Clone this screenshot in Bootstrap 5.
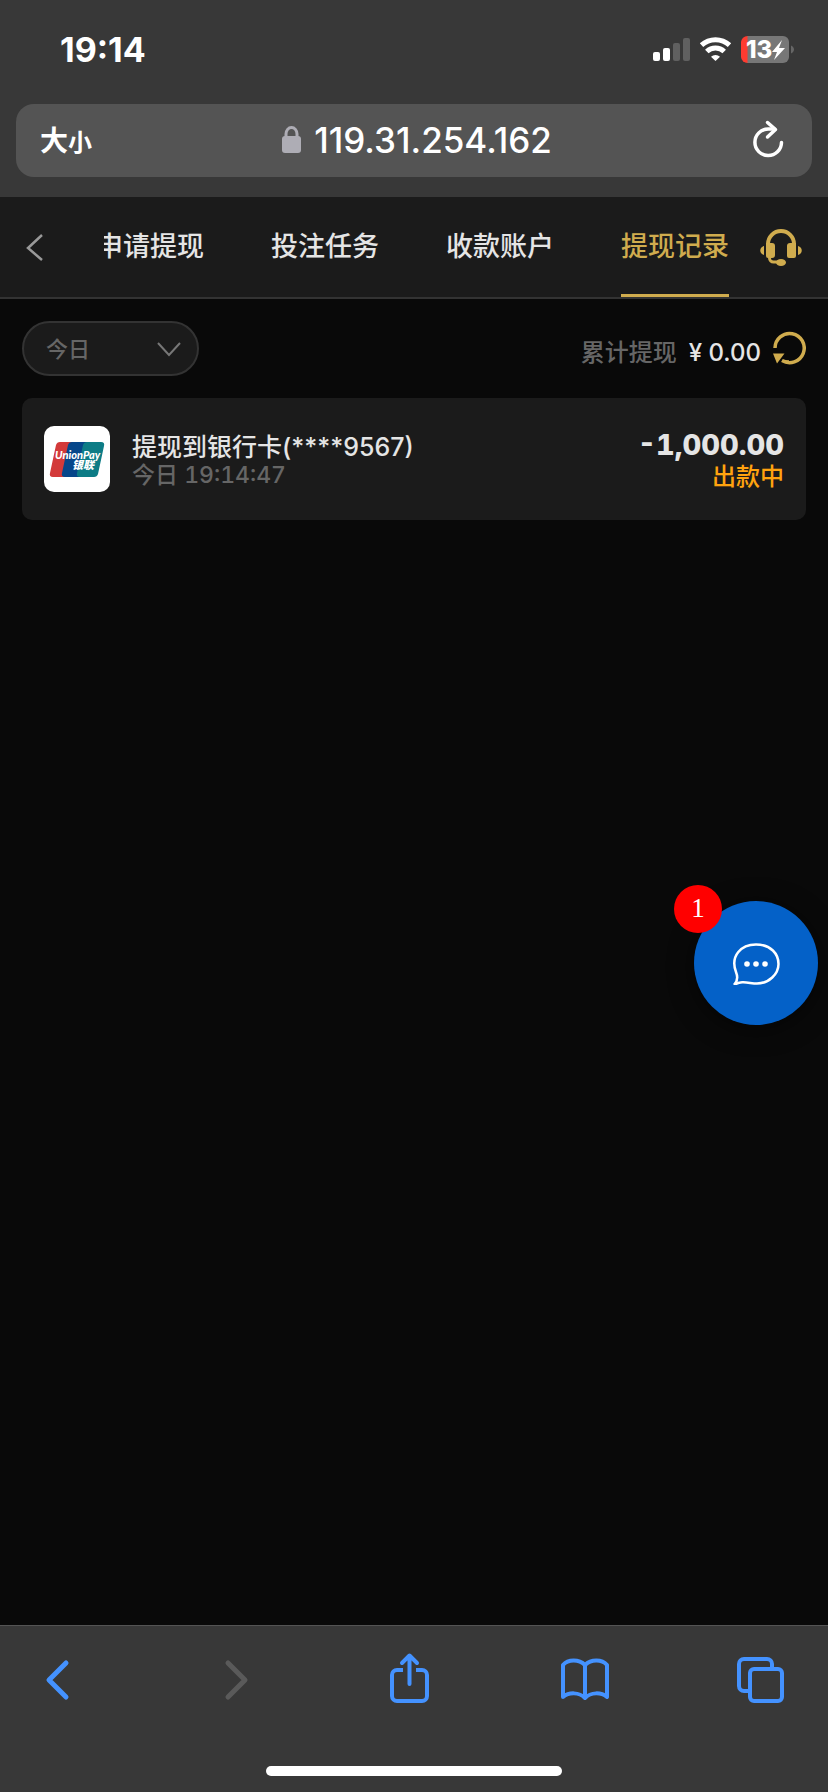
<!DOCTYPE html>
<html lang="zh-CN">
<head>
<meta charset="utf-8">
<meta name="viewport" content="width=device-width, initial-scale=1">
<title>提现记录</title>
<link href="https://cdn.jsdelivr.net/npm/bootstrap@5.3.0/dist/css/bootstrap.min.css" rel="stylesheet">
<style>
  body { background: #090909; color: #e5e5e5; font-family: Inter, "Noto Sans CJK SC", sans-serif; font-size: 24px; font-weight: 500; line-height: 28px; }
  svg { display: block; flex: none; }
  .chrome { background: #383838; color: #fff; }
  .status-bar { height: 104px; padding: 0 34px 4px 60px; }
  .clock { font-size: 34px; font-weight: 700; }
  .time, .amount { font-variant-numeric: tabular-nums; }
  .plain { background: none; border: 0; padding: 0; color: inherit; font: inherit; }
  .address { background: #545454; border-radius: 18px; height: 73px; padding: 0 28px 2px 24px; margin: 0 16px 20px; }
  .address .side { flex: 1 1 0; }
  .big { font-size: 28px; font-weight: 700; }
  .little { font-size: 24px; font-weight: 700; }
  .site { padding-left: 10px; }
  .host { font-size: 35px; line-height: 40px; }
  .tabs-bar { background: #1b1b1b; border-bottom: 2px solid #333; height: 102px; padding: 0 26px; }
  .tab-strip { margin: 0 31px 0 61px; gap: 67px; min-width: 0; }
  .tab-strip a { color: #e5e5e5; text-decoration: none; font-size: 27px; line-height: 95px; padding-top: 2px; border-bottom: 3px solid transparent; white-space: nowrap; }
  .tab-strip a.active { color: #d0ac4e; border-color: #d0ac4e; }
  .gold { color: #d0ac4e; }
  .dim { color: #666; }
  .gutter { padding: 22px; }
  .filters { margin-bottom: 22px; }
  .filter select { appearance: none; width: 177px; height: 55px; border: 2px solid #333; border-radius: 28px; background: #1b1b1b; color: #666; padding: 0 22px; font-size: 22px; font-weight: 500; }
  .filter svg { right: 18px; top: 20px; pointer-events: none; }
  .total { padding-top: 8px; margin-right: 12px; }
  .record { background: #1b1b1b; border-radius: 10px; padding: 28px 22px; gap: 22px; }
  .record-text { padding-top: 3px; }
  .logo { background: #fff; border-radius: 10px; }
  .title { font-size: 25px; }
  .time { font-size: 23px; }
  .amount { font-size: 29px; font-weight: 800; line-height: 32px; }
  .state { line-height: 31px; color: #ffa30f; }
  .chat { right: 10px; bottom: 600px; width: 124px; height: 124px; background: #0461c8; box-shadow: 0 4px 24px #0008; }
  .unread { left: -20px; top: -16px; width: 48px; height: 48px; background: #f00; font: 27px/46px "Liberation Serif", serif; }
  .toolbar { border-top: 1px solid #545454; height: 167px; }
  .tools { padding: 26px 43px 0 34px; color: #4492ff; }
  .home { width: 296px; height: 10px; background: #fff; border-radius: 5px; margin-bottom: 16px; }
</style>
</head>
<body>
<div class="d-flex flex-column min-vh-100">
  <header class="chrome">
    <div class="status-bar d-flex justify-content-between align-items-center">
      <span class="clock">19:14</span>
      <div class="d-flex align-items-center">
        <svg width="142" height="28" viewBox="0 0 142 28" role="img" aria-label="信号、无线网络、电量 13%">
          <g fill="#fff"><rect x="1" y="16" width="7" height="9" rx="2"/><rect x="11" y="12" width="7" height="13" rx="2"/></g>
          <g fill="#606060"><rect x="21" y="7" width="7" height="18" rx="2"/><rect x="31" y="2" width="7" height="23" rx="2"/></g>
          <g fill="none" stroke="#fff" stroke-width="5"><path d="M49.500 9.200a20.500 20.500 0 0 1 28 0"/><path d="M54.800 15.500a12.600 12.600 0 0 1 17.400 0"/></g>
          <path d="M63.500 25l-4.500-4.300a6.500 6.500 0 0 1 9 0z" fill="#fff"/>
          <path d="M95 0h36a6 6 0 0 1 6 6v15a6 6 0 0 1-6 6H95z" fill="#777"/>
          <path d="M95.500 0v27a6.500 6.500 0 0 1-6.500-6V6a6.500 6.500 0 0 1 6.500-6z" fill="#ff3b30"/>
          <path d="M139 9.500c4 2 4 6 0 8z" fill="#666"/>
          <text x="94" y="22" fill="#fff" font-size="24" font-weight="800">13</text>
          <path d="M130 4l-10 12h5l-3 8 11-12h-6l3-8z" fill="#fff"/>
        </svg>
      </div>
    </div>
    <div class="address d-flex align-items-center">
      <div class="side pt-1"><button class="plain" type="button" aria-label="大小"><span class="big">大</span><span class="little">小</span></button></div>
      <button class="plain site d-flex align-items-center" type="button">
        <svg class="me-2" width="24" height="28" viewBox="0 0 24 28"><rect x="0" y="10" width="19" height="17" rx="3" fill="#aeadb5"/><path d="M4 12V8a5.500 6.500 0 0 1 11 0v4" fill="none" stroke="#aeadb5" stroke-width="3"/></svg>
        <span class="host">119.31.254.162</span>
      </button>
      <div class="side d-flex justify-content-end">
        <button class="plain" type="button" aria-label="重新载入"><svg width="32" height="40" viewBox="0 0 32 40" fill="none" stroke="#fff" stroke-width="3.500" stroke-linecap="round" stroke-linejoin="round"><path d="M29.500 22.500a13.300 13.300 0 1 1-13.300-13.500h6"/><path d="M15.500 2.500l8 7-8 7.500"/></svg></button>
      </div>
    </div>
  </header>

  <nav class="tabs-bar d-flex align-items-center">
    <button class="plain" type="button" aria-label="返回"><svg width="17" height="28" viewBox="0 0 17 28" fill="none" stroke="#999" stroke-width="2.500"><path d="M16 2L2 15l14 12"/></svg></button>
    <div class="tab-strip d-flex flex-grow-1 justify-content-end overflow-hidden">
      <a href="#apply">申请提现</a>
      <a href="#tasks">投注任务</a>
      <a href="#accounts">收款账户</a>
      <a href="#records" class="active" aria-current="page">提现记录</a>
    </div>
    <button class="plain gold" type="button" aria-label="客服">
      <svg width="42" height="40" viewBox="0 -2 42 40" fill="currentColor">
        <path d="M8 16v-1a13 13 0 0 1 26 0v1" fill="none" stroke="currentColor" stroke-width="4"/>
        <path d="M6 14h6a3 3 0 0 1 3 3v9a3 3 0 0 1-3 3H8a2 2 0 0 1-2-2zM36 14h-6a3 3 0 0 0-3 3v10a2 2 0 0 0 2 2h5a2 2 0 0 0 2-2zM4 17v9c-5-1-5-8 0-9zM38 17v9c5-1 5-8 0-9z"/>
        <path d="M9.500 27v2a4 4 0 0 0 4 4H19" fill="none" stroke="currentColor" stroke-width="3"/><ellipse cx="21" cy="33.500" rx="5" ry="3.500"/>
      </svg>
    </button>
  </nav>

  <main class="flex-grow-1 position-relative gutter">
    <div class="filters d-flex justify-content-between align-items-center">
      <div class="filter position-relative">
        <select aria-label="日期"><option>今日</option><option>昨日</option></select>
        <svg class="position-absolute" width="24" height="16" viewBox="0 0 24 16" fill="none" stroke="#777" stroke-width="2"><path d="M1 2l11 12L23 2"/></svg>
      </div>
      <div class="d-flex align-items-center">
        <span class="dim total">累计提现</span>
        <span class="total">¥ 0.00</span>
        <button class="plain gold" type="button" aria-label="刷新"><svg width="33" height="36" viewBox="0 0 33 36"><path d="M2 17A14.600 14.600 0 1 1 9 29.500Q12 31 16 31" fill="none" stroke="currentColor" stroke-width="3.500"/><path d="M0 22.500h11.500L4 32.500z" fill="currentColor"/></svg></button>
      </div>
    </div>

    <div class="record d-flex align-items-center">
      <svg class="logo" width="66" height="66" viewBox="0 0 66 66" role="img" aria-label="银联">
        <path d="M16 16h18l-8 35H9q-4 0-3-4l6-28q1-3 4-3z" fill="#d33a3a"/>
        <path d="M28 16h18l-8 35H21q-4 0-3-4l6-28q1-3 4-3z" fill="#06468a"/>
        <path d="M43 16h14q4 0 3 4l-6 28q-1 3-4 3H36q-4 0-3-4l6-28q1-3 4-3z" fill="#0d7c86"/>
        <text x="11" y="33" fill="#fff" font-family="Lato" font-size="11" font-weight="900" font-style="italic">UnionPay</text>
        <text x="28" y="43" fill="#fff" font-size="11" font-weight="900" font-style="italic">银联</text>
      </svg>
      <div class="record-text flex-grow-1">
        <div class="title">提现到银行卡(****9567)</div>
        <div class="time dim">今日 19:14:47</div>
      </div>
      <div class="record-text text-end">
        <div class="amount">-1,000.00</div>
        <div class="state">出款中</div>
      </div>
    </div>

    <button class="plain chat position-absolute rounded-circle d-flex align-items-center justify-content-center text-white" type="button" aria-label="在线客服，1 条未读">
      <svg width="48" height="44" viewBox="0 -2 48 44"><path d="M2 42c4-4 4-8 2-13C-2 13 9 1.500 24 1.500S46.500 11 46.500 21 37 40.500 25 40.500C17 40.500 10 37 2 42z" fill="none" stroke="#fff" stroke-width="2.500"/><g fill="#fff"><circle cx="15" cy="21" r="2.800"/><circle cx="24" cy="21" r="2.800"/><circle cx="33" cy="21" r="2.800"/></g></svg>
      <span class="unread position-absolute rounded-circle text-center">1</span>
    </button>
  </main>

  <footer class="chrome toolbar d-flex flex-column justify-content-between align-items-center">
    <div class="tools w-100 d-flex justify-content-between">
      <button class="plain" type="button" aria-label="后退"><svg width="48" height="56" viewBox="0 0 48 56" fill="none" stroke="currentColor" stroke-width="5" stroke-linecap="round" stroke-linejoin="round"><path d="M32 11L15 28l17 17"/></svg></button>
      <button class="plain" type="button" aria-label="前进" disabled><svg width="48" height="56" viewBox="0 0 48 56" fill="none" stroke="#5a5a5a" stroke-width="5" stroke-linecap="round" stroke-linejoin="round"><path d="M19 11l17 17-17 17"/></svg></button>
      <button class="plain" type="button" aria-label="共享"><svg width="48" height="56" viewBox="0 0 48 56" fill="none" stroke="currentColor" stroke-width="4" stroke-linecap="round" stroke-linejoin="round"><path d="M18 18h-6a5 5 0 0 0-5 5v21a5 5 0 0 0 5 5h25a5 5 0 0 0 5-5V23a5 5 0 0 0-5-5h-6" stroke-linecap="butt"/><path d="M24.500 32V4M17 11l7.500-7.500L32 11"/></svg></button>
      <button class="plain" type="button" aria-label="书签"><svg width="50" height="56" viewBox="0 0 50 56" fill="none" stroke="currentColor" stroke-width="4" stroke-linecap="round" stroke-linejoin="round"><path d="M25 13C19 7 8 7 3 13v32c6-5 16-5 22 1 6-6 16-6 22-1V13c-5-6-16-6-22 0v33"/></svg></button>
      <button class="plain" type="button" aria-label="标签页"><svg width="48" height="56" viewBox="0 0 48 56" fill="none" stroke="currentColor" stroke-width="4"><rect x="13" y="17" width="32" height="32" rx="4"/><path d="M13 39H7a5 5 0 0 1-5-5V12a5 5 0 0 1 5-5h23a5 5 0 0 1 5 5v5"/></svg></button>
    </div>
    <div class="home"></div>
  </footer>
</div>
<script src="https://cdn.jsdelivr.net/npm/bootstrap@5.3.0/dist/js/bootstrap.bundle.min.js"></script>
</body>
</html>
